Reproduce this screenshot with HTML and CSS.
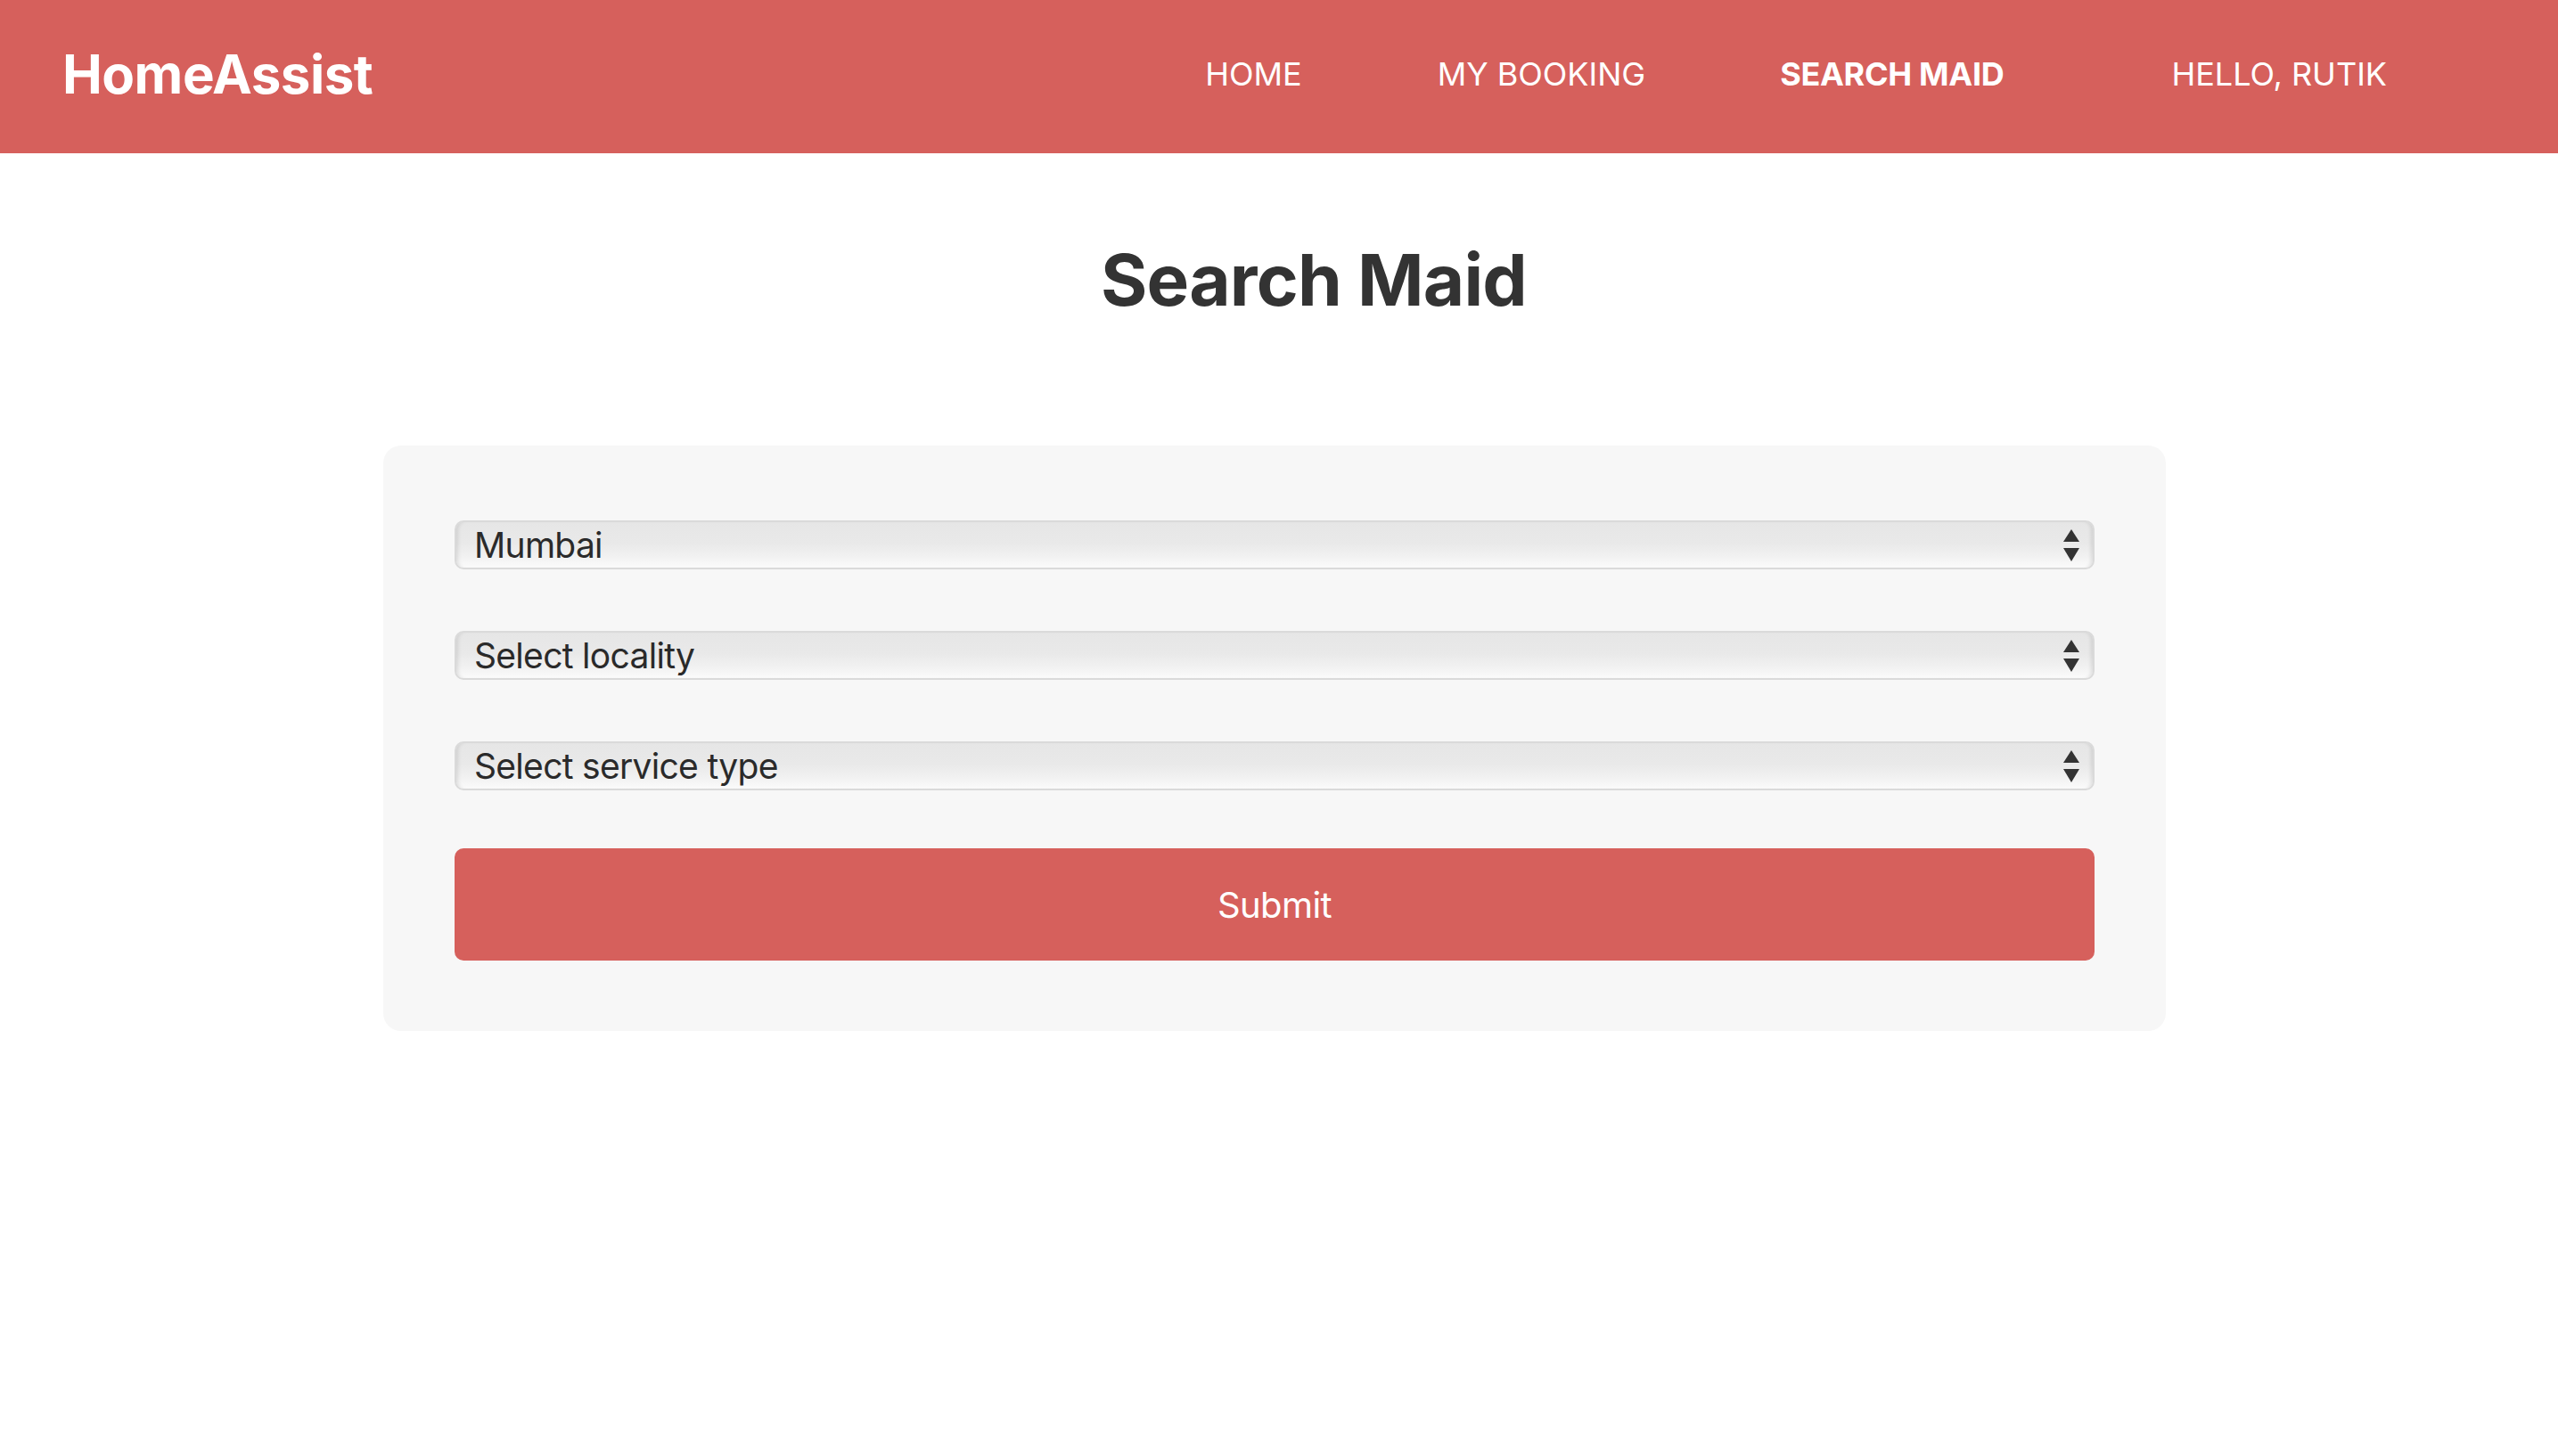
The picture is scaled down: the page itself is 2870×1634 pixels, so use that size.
FILE: index.html
```html
<!DOCTYPE html>
<html lang="en">
<head>
<meta charset="utf-8">
<title>HomeAssist - Search Maid</title>
<link rel="stylesheet" href="styles.css">
</head>
<body>
<header class="topbar">
  <div class="brand">HomeAssist</div>
  <nav class="nav">
    <a class="nav-link" href="#">HOME</a>
    <a class="nav-link" href="#">MY BOOKING</a>
    <a class="nav-link active" href="#">SEARCH MAID</a>
    <span class="nav-user">HELLO, RUTIK</span>
  </nav>
</header>
<main class="page">
  <h1 class="title">Search Maid</h1>
  <form class="card">
    <div class="field">
      <select class="select"><option>Mumbai</option></select>
      <svg class="arrows" width="18" height="38" viewBox="0 0 18 38"><path d="M9 0 L18 14 L0 14 Z" fill="#333"/><path d="M0 21 L18 21 L9 36 Z" fill="#333"/></svg>
    </div>
    <div class="field">
      <select class="select"><option>Select locality</option></select>
      <svg class="arrows" width="18" height="38" viewBox="0 0 18 38"><path d="M9 0 L18 14 L0 14 Z" fill="#333"/><path d="M0 21 L18 21 L9 36 Z" fill="#333"/></svg>
    </div>
    <div class="field">
      <select class="select"><option>Select service type</option></select>
      <svg class="arrows" width="18" height="38" viewBox="0 0 18 38"><path d="M9 0 L18 14 L0 14 Z" fill="#333"/><path d="M0 21 L18 21 L9 36 Z" fill="#333"/></svg>
    </div>
    <button class="submit" type="button">Submit</button>
  </form>
</main>
</body>
</html>
```
FILE: styles.css
```css
* { box-sizing: border-box; }
html, body { margin: 0; padding: 0; background: #fff; }
body { font-family: Inter, "Noto Sans", sans-serif; color: #333; }

.topbar {
  height: 172px;
  background: #d6605c;
  display: flex;
  align-items: center;
  justify-content: space-between;
  padding: 0 192px 7px 70px;
}
.brand {
  color: #fff;
  font-weight: 700;
  font-size: 60px;
  line-height: 1;
  letter-spacing: -0.5px;
}
.nav {
  display: flex;
  align-items: center;
  gap: 152px;
}
.nav-link, .nav-user {
  color: #fff;
  text-decoration: none;
  font-size: 36px;
  line-height: 1;
}
.nav-link.active { font-weight: 700; margin-left: -1px; letter-spacing: -0.3px; }
.nav-user { margin-left: 36px; }

.page {
  display: flex;
  flex-direction: column;
  align-items: flex-start;
  padding: 102px 0 0 430px;
}
.title {
  margin: 0 0 146px 0;
  width: 2000px;
  padding-left: 88px;
  text-align: center;
  font-size: 80px;
  line-height: 80px;
  font-weight: 700;
  letter-spacing: -0.8px;
  color: #333;
}
.card {
  width: 2000px;
  background: #f7f7f7;
  border-radius: 20px;
  padding: 84px 80px 79px 80px;
  display: flex;
  flex-direction: column;
}
.field {
  position: relative;
  height: 55px;
  margin-bottom: 69px;
}
.field:nth-of-type(3) { margin-bottom: 65px; }
.select {
  -webkit-appearance: none;
  appearance: none;
  width: 100%;
  height: 55px;
  border: 2px solid #dadada;
  border-radius: 10px;
  background: linear-gradient(to bottom, #e6e6e6 0%, #e9e9e9 45%, #f1f1f1 75%, #fbfbfb 100%);
  box-shadow: inset 5px 0 4px -3px rgba(0,0,0,0.10), inset -5px 0 4px -3px rgba(0,0,0,0.10);
  font-family: Inter, "Noto Sans", sans-serif;
  font-size: 39px;
  letter-spacing: -0.7px;
  color: #2a2a2a;
  padding: 0 60px 0 20px;
  line-height: 51px;
}
.arrows {
  position: absolute;
  right: 17px;
  top: 10px;
  pointer-events: none;
}
.submit {
  height: 126px;
  border: none;
  border-radius: 10px;
  background: #d6605c;
  color: #fff;
  font-family: Inter, "Noto Sans", sans-serif;
  font-size: 40px;
  letter-spacing: -0.6px;
  cursor: pointer;
}
```
